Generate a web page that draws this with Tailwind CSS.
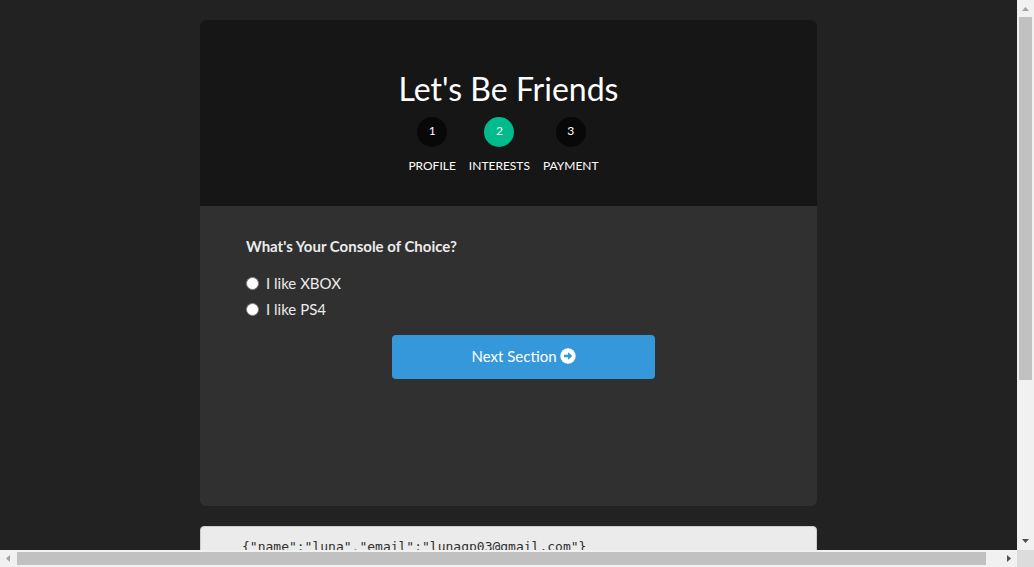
<!DOCTYPE html>
<html lang="en">
<head>
<meta charset="utf-8">
<meta name="viewport" content="width=device-width, initial-scale=1">
<title>Let's Be Friends</title>
<script src="https://cdn.jsdelivr.net/npm/@tailwindcss/browser@4"></script>
</head>
<body class="grid h-screen grid-cols-[minmax(0,1fr)_17px] grid-rows-[minmax(0,1fr)_17px] overflow-hidden bg-[#222222] font-['Lato',sans-serif] text-base text-[#ebebeb]">
  <main class="overflow-hidden px-4 pt-5">
    <div class="mx-auto w-full max-w-[617px]">
      <section class="overflow-hidden rounded-md bg-[#303030]">
        <header class="bg-[#161616] px-4 pt-12 pb-8 text-center text-white">
          <h1 class="text-[32px] leading-[42px]">Let's Be Friends</h1>
          <nav class="mt-[7px] flex justify-center gap-[13px] pr-[10px] text-xs" aria-label="Steps">
            <a href="#profile" class="flex flex-col items-center gap-[10px]"><span class="flex h-[30px] w-[30px] justify-center rounded-full bg-[#080808] leading-7">1</span><span class="leading-[17px]">PROFILE</span></a>
            <a href="#interests" class="flex flex-col items-center gap-[10px]"><span class="flex h-[30px] w-[30px] justify-center rounded-full bg-[#00bc8c] leading-7">2</span><span class="leading-[17px]">INTERESTS</span></a>
            <a href="#payment" class="flex flex-col items-center gap-[10px]"><span class="flex h-[30px] w-[30px] justify-center rounded-full bg-[#080808] leading-7">3</span><span class="leading-[17px]">PAYMENT</span></a>
          </nav>
        </header>
        <form class="min-h-[300px] pt-7 pr-4 pl-[46px] text-[15px]">
          <fieldset>
            <legend class="font-bold leading-6">What's Your Console of Choice?</legend>
            <div class="mt-[13px] flex flex-col gap-[2px] leading-6">
              <label class="flex items-center gap-[7px]"><input type="radio" name="console" value="xbox" class="h-[13px] w-[13px] appearance-none rounded-full border border-[#808080] bg-white">I like XBOX</label>
              <label class="flex items-center gap-[7px]"><input type="radio" name="console" value="ps4" class="h-[13px] w-[13px] appearance-none rounded-full border border-[#808080] bg-white">I like PS4</label>
            </div>
          </fieldset>
          <button type="button" class="mx-auto mt-[14px] flex h-11 w-[263px] items-center justify-center gap-[3px] rounded bg-[#3498db] pb-[2px] text-white">Next Section
            <svg class="h-4 w-4" viewBox="0 0 16 16" aria-hidden="true"><circle cx="8" cy="8" r="7.7" fill="#fff"/><path d="M4 6.800h4V4.200L12.400 8 8 11.800V9.200H4z" fill="#3498db"/></svg>
          </button>
        </form>
      </section>
      <pre class="mt-5 h-16 rounded border border-[#cccccc] bg-[#ebebeb] px-[41px] pt-[10px] font-['DejaVu_Sans_Mono',monospace] text-[13px] leading-5 text-[#303030]">{"name":"luna","email":"lunagp03@gmail.com"}</pre>
    </div>
  </main>
  <div class="flex flex-col items-center justify-between bg-[#f1f1f1]" aria-hidden="true">
    <svg class="h-[17px] w-[17px] shrink-0" viewBox="0 0 17 17"><path d="M8.500 7L12 11H5z" fill="#a3a3a3"/></svg>
    <div class="flex w-[13px] grow flex-col"><div class="h-[363px] bg-[#c1c1c1]"></div></div>
    <svg class="h-[17px] w-[17px] shrink-0" viewBox="0 0 17 17"><path d="M5 6h7l-3.500 4z" fill="#505050"/></svg>
  </div>
  <div class="flex items-center bg-[#f1f1f1]" aria-hidden="true">
    <svg class="h-[17px] w-[17px] shrink-0" viewBox="0 0 17 17"><path d="M6 8.500L10 5v7z" fill="#a3a3a3"/></svg>
    <div class="mr-[14px] h-[13px] grow bg-[#c1c1c1]"></div>
    <svg class="h-[17px] w-[17px] shrink-0" viewBox="0 0 17 17"><path d="M7 5v7l4-3.500z" fill="#505050"/></svg>
  </div>
  <div class="bg-[#dcdcdc]"></div>
</body>
</html>
